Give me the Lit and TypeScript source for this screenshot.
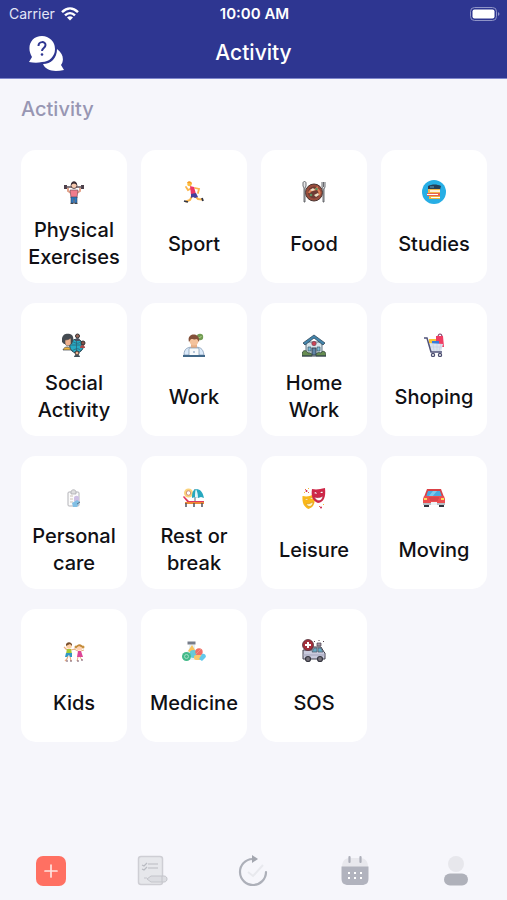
import { LitElement, html, css, svg } from "lit";
import { customElement, property, state } from "lit/decorators.js";
import { classMap } from "lit/directives/class-map.js";

const icons: Record<string, unknown> = {
  exercises: svg`
    <path d="M2 5h3v4H2zM19 5h3v4h-3z" fill="#4c3f49"/>
    <path d="M4 7h16" stroke="#5d5058" stroke-width="1.5"/>
    <path d="M6 8v3l3 2M18 8v3l-3 2" fill="none" stroke="#e3a38b" stroke-width="2"/>
    <path d="M8 10h8l-1 8H9z" fill="#f07c8c" stroke="#6a4450" stroke-width=".6"/>
    <circle cx="12" cy="5.5" r="3" fill="#f6c9ae" stroke="#413038" stroke-width=".8"/>
    <path d="M9 5c0-5 6-5 6 0-2-2-4-2-6 0z" fill="#3b2c33"/>
    <path d="M9 17h6v6h-2.500v-4h-1v4H9z" fill="#2d79c0" stroke="#34415c" stroke-width=".6"/>
    <path d="M8.500 23.500h3M12.500 23.500h3" stroke="#444" stroke-width="1"/>`,
  sport: svg`
    <path d="M10 8 6 10 4 7M13 8l4 1-1 4" fill="none" stroke="#fbb54b" stroke-width="1.800" stroke-linecap="round"/>
    <path d="m10 16-2 4-4 1.500M13 16l3 3 4 .5" fill="none" stroke="#fbb54b" stroke-width="2" stroke-linecap="round"/>
    <path d="m8 6 4 1 2 7-5 1z" fill="#ed3767"/>
    <path d="m9 14 5-1 2 4-3 1-2-1-2 1z" fill="#45409b"/>
    <circle cx="7.500" cy="4" r="2.300" fill="#fcbd3f"/>
    <path d="M5 3c1-3 5-2 5 1L8 3z" fill="#f59a24"/>
    <path d="m2 21 4 1M20 18l1 3" stroke="#303543" stroke-width="1.800"/>`,
  food: svg`
    <circle cx="12" cy="12.500" r="8.500" fill="#994d3c" stroke="#49332f" stroke-width="1"/>
    <circle cx="12" cy="12.500" r="6" fill="#6e3c34"/>
    <path d="M7 13c2-5 5-1 8-5 1 3 4 3 2 7" fill="none" stroke="#de8055" stroke-width="2"/>
    <path d="m8 10 3-2 2 2-3 1zM12 15l4-2 1 2-3 2z" fill="#eee0c5"/>
    <circle cx="14.500" cy="9" r="1.300" fill="#5c9261"/><circle cx="9" cy="15" r="1.300" fill="#5c9261"/>
    <path d="M1 3c0-2 3-2 3 0v3L3 8v14H2V8L1 6z" fill="#e6e6e8" stroke="#494b50" stroke-width=".8"/>
    <path d="M20 2v5l1 2v13h1V9l1-2V2M21.500 2v5" fill="#e6e6e8" stroke="#494b50" stroke-width=".8"/>`,
  studies: svg`
    <circle cx="12" cy="12" r="12" fill="#27aee5"/>
    <path d="M6 6c4-2 9-2 13 0l-1 4H6z" fill="#263f57"/><path d="M8 6h4v2H8z" fill="#46708c"/>
    <path d="M6 9h12v4H6z" fill="#f2b84b"/><path d="M8 10h10v2H8z" fill="#fff1d9"/>
    <path d="M5 13h13v3H5z" fill="#e76351"/><path d="M5 14h11v1H5z" fill="#fff"/>
    <path d="M7 16h11v3H7z" fill="#eeb63e"/><path d="M9 17h9v1H9z" fill="#fff"/>`,
  social: svg`
    <circle cx="14.500" cy="13" r="6.800" fill="#27a9c2" stroke="#294653" stroke-width="1"/>
    <path d="M8 12h13M14.500 6v14M10 8c4 3 7 3 9 0M10 18c4-3 7-3 9 0" fill="none" stroke="#2c647a" stroke-width=".8"/>
    <path d="M0 9C-1 1 4 0 8 1c4 1 4 6 2 10H2z" fill="#444b51"/>
    <path d="M3 7c3 0 4-1 6-2v6c-2 3-6 2-6-1z" fill="#f0b18e" stroke="#424449" stroke-width=".6"/>
    <path d="M1 17c1-4 7-4 8 0z" fill="#efb33c" stroke="#3e4449" stroke-width=".7"/>
    <circle cx="15.500" cy="3" r="2" fill="#9a6657" stroke="#333" stroke-width="1"/><path d="M13 8c0-4 5-4 5 0z" fill="#485363"/>
    <circle cx="21" cy="10" r="2" fill="#884f46" stroke="#333" stroke-width="1"/><path d="M18 15c0-4 5-4 5 0z" fill="#a94848"/>
    <circle cx="15" cy="20" r="2" fill="#e7b292" stroke="#333" stroke-width="1"/><path d="M12 24c0-3 6-3 6 0z" fill="#424f59"/>`,
  work: svg`
    <circle cx="18" cy="4" r="3.200" fill="#719c53"/><path d="m16.500 4 1 1 2-2" fill="none" stroke="#b8d58b"/>
    <path d="M2 22c0-7 4-8 10-8s9 1 10 8z" fill="#dbeafa" stroke="#7890ad" stroke-width=".7"/>
    <path d="M9 11h6v4l-3 2-3-2z" fill="#e8af87"/>
    <circle cx="12" cy="8" r="4.500" fill="#f4c29c"/>
    <path d="M7 9C4-1 19-1 17 9l-2-3c-3 1-5 0-6 0z" fill="#835039"/>
    <rect x="7" y="15" width="10" height="8" rx="1" fill="#f8fafc" stroke="#8096ae" stroke-width=".7"/>
    <circle cx="12" cy="19" r="1" fill="#a2b6cf"/><path d="M1 23h22" stroke="#416889" stroke-width="2"/>`,
  home: svg`
    <path d="M4 9h16v12H4z" fill="#d6e5eb" stroke="#405768" stroke-width=".8"/>
    <path d="M1 10 12 2l11 8-2 2-9-7-9 7z" fill="#4386ad" stroke="#31475b" stroke-width=".8"/>
    <circle cx="12" cy="10.500" r="2.200" fill="#cb4355" stroke="#6c4150" stroke-width=".6"/>
    <path d="M10 15h4v7h-4z" fill="#6084a5" stroke="#364655"/><path d="M6 14h3v4H6zM15 14h3v4h-3z" fill="#78b8d4" stroke="#435665" stroke-width=".7"/>
    <path d="M0 22c0-6 5-5 6-2 4-1 4 3 4 3H0zM14 23c0-4 3-4 5-3 1-3 5-2 5 2v1z" fill="#668c51" stroke="#32463a" stroke-width=".8"/>
    <path d="M0 23h24" stroke="#354450"/>`,
  shopping: svg`
    <path d="M16 4c0-4 4-4 4 0" fill="none" stroke="#863d69" stroke-width="1.200"/>
    <path d="M14 3h7l1 11h-8z" fill="#ef3e63"/><path d="M7 6h7v7H7z" fill="#f8c534"/><path d="M10 8h7v5h-7z" fill="#357cdc"/>
    <path d="m6 10 15 1-2 8H9z" fill="#dce3ef"/><path d="m11 11 1 7M15 11v7M19 11l-2 7M8 14h12" stroke="#c3ccdc" stroke-width=".6"/>
    <path d="M2 5h3l4 14h11" fill="none" stroke="#505379" stroke-width="1.500"/>
    <circle cx="11" cy="22" r="1.600" fill="#eee" stroke="#4b4d70" stroke-width="1.200"/><circle cx="18" cy="22" r="1.600" fill="#eee" stroke="#4b4d70" stroke-width="1.200"/>`,
  care: svg`
    <rect x="6" y="6" width="11" height="14" rx="1" fill="#fbfbfb" stroke="#b3b3b8" stroke-width="1"/>
    <path d="M9 6c0-3 5-3 5 0v2H9z" fill="#ddd" stroke="#a5a5ab" stroke-width=".7"/>
    <path d="M8 10h3M8 13h3M8 16h3" stroke="#c4b6a8" stroke-width=".8"/>
    <path d="M12 12c0-3 5-3 5 0v3l-3 2-2-2z" fill="#cdbfe4"/>
    <path d="m10 17 5-3 3 2-3 5h-4z" fill="#82bfe4"/><path d="m15 18 3-2" stroke="#60788e"/>`,
  rest: svg`
    <circle cx="6.500" cy="7" r="4.500" fill="#fbd27b"/><circle cx="6.500" cy="7" r="2.200" fill="#fff" stroke="#bb6a63" stroke-width=".7"/>
    <path d="M13 3v12" stroke="#526a7c" stroke-width="1"/>
    <path d="M10 12c0-6 1-8 4-9 5 0 7 4 8 9l-3-1-3 1-3-1z" fill="#27a8bf"/><path d="M14 3c-1 2-1 5-1 8l3 1c0-4-1-7-2-9z" fill="#e5f6f8"/>
    <path d="m2 10 5 5h15v2H6l-5-6z" fill="#dd3760"/><path d="M3 16h19v2H3z" fill="#ee8a37"/>
    <path d="M4 17v4M12 17v4M20 17v4" stroke="#51505c" stroke-width="1.500"/>`,
  leisure: svg`
    <path d="M.5 10c5 1 8 0 12-2 1 8 0 13-6 15C2 21 0 17 .5 10z" fill="#f9b719"/>
    <path d="M3 14c1-2 3-1 3 0M8 13c1-2 3-1 3 0M4 18c3 0 5-1 7-2 0 5-5 6-7 2z" fill="#fff5c8" stroke="#ca8710" stroke-width=".5"/>
    <path d="M10 3c5 1 8 0 13-1 1 9-1 14-7 15-6-2-7-8-6-14z" fill="#ce2748"/>
    <path d="M12 7c1-2 3-1 3 1M18 7c1-2 3-2 3 0M12 11c3 1 6 1 9-1-1 6-6 6-9 1z" fill="#fff" stroke="#a51c38" stroke-width=".5"/>
    <path d="M3 3h1v1H3zM6 6h1v1H6zM17 20h1v1h-1z" fill="#e76754"/><path d="M6 2h1v1H6zM2 6h1v1H2zM21 18h1v1h-1z" fill="#f3bd38"/>
    <circle cx="19" cy="21.500" r="1" fill="#ce2748"/><circle cx="4.500" cy="5" r="1" fill="#ce2748"/>`,
  car: svg`
    <path d="M2 17h5v4H2zM17 17h5v4h-5z" fill="#30343d"/>
    <path d="M5 3h14l3 8H2z" fill="#da4146"/><path d="M6 5h12l2 6H4z" fill="#4aa9e0"/><path d="M11 5h4l-5 6H6z" fill="#7cc8ec"/>
    <path d="M2 10h20l1 3v6H1v-6z" fill="#ed4e50"/>
    <path d="M2 12h3v2H2zM19 12h3v2h-3z" fill="#ffd85c"/><path d="M7 12h10M8 14h8" stroke="#c83c48" stroke-width="1"/>
    <path d="M1 17h22v2H1z" fill="#b7bfc5"/><path d="M9 16h6v3H9z" fill="#eef4f7"/>`,
  kids: svg`
    <path d="M5 11 2 8M9 11l4-1M8 17l1 5M6 17l-1 3-2 2" fill="none" stroke="#e9ad82" stroke-width="1.200"/>
    <circle cx="7" cy="7" r="2.800" fill="#ffd0a5"/><path d="M4 7c-1-5 7-5 6 0L8 5z" fill="#79502e"/>
    <path d="M5 10h4l1 5H4z" fill="#a5c934"/><path d="M4 14h6v4H8l-1-2-2 2H3z" fill="#3398c4"/>
    <path d="m16 12-4-2M19 12l3-1M16 18l-1 4M18 18l2 3" fill="none" stroke="#e7ad85" stroke-width="1"/>
    <circle cx="14" cy="8" r="1.500" fill="#c99340"/><circle cx="21" cy="8" r="1.500" fill="#c99340"/>
    <circle cx="17.500" cy="9" r="2.800" fill="#ffd2b1"/><path d="M14 9c0-5 7-5 7 0l-4-2z" fill="#c18a3a"/>
    <path d="M16 12h3l2 6h-6z" fill="#dd4596"/><path d="M4 22h2M8 22h2M15 22h2M19 21h2" stroke="#755263" stroke-width="1"/>`,
  medicine: svg`
    <path d="M7 6h6v4l2 3v8H5v-8l2-3z" fill="#e6f1f4"/><rect x="5.500" y="2.500" width="8" height="3" fill="#777d89"/>
    <path d="m10 6 3 5-2 4-5-3z" fill="#fac45c"/><circle cx="11.500" cy="15" r="4" fill="#65cad8"/>
    <circle cx="17" cy="13" r="3.700" fill="#f06e67"/><path d="m14 15 5-5" stroke="#ee9a89" stroke-width=".8"/>
    <circle cx="4.500" cy="17.500" r="4.500" fill="#45ba8a"/><circle cx="4.500" cy="17.500" r="2" fill="none" stroke="#a3dec3" stroke-width="1"/>
    <rect x="12" y="16" width="8" height="5" rx="2" fill="#f9c76a"/><path d="m17 20 3-5c3-1 5 2 3 4l-3 3z" fill="#62c9ec"/>`,
  sos: svg`
    <path d="M1 11h9V8h9l3 5 1 1v6H1z" fill="#c9cadd" stroke="#42414d" stroke-width="1"/>
    <path d="M12 9h3v4h-5zM16 9h3l2 4h-5z" fill="#66a9c3" stroke="#4b5766" stroke-width=".7"/>
    <path d="M1 16h22" stroke="#a3a3ba"/><path d="M15 7V4h4v3z" fill="#a6929e" stroke="#45414d" stroke-width=".7"/>
    <path d="m13 3-1-1M17 2V1M21 3l1-1" stroke="#55414d" stroke-width="1"/>
    <circle cx="6" cy="6" r="5.500" fill="#a32e3b" stroke="#522e37" stroke-width=".8"/><path d="M5 3h2v2h2v2H7v2H5V7H3V5h2z" fill="#fff"/>
    <circle cx="6" cy="20" r="2.500" fill="#77727b" stroke="#353640" stroke-width="1.200"/><circle cx="18" cy="20" r="2.500" fill="#77727b" stroke="#353640" stroke-width="1.200"/>`,
};

const activities = [
  ["exercises", "Physical Exercises"], ["sport", "Sport"], ["food", "Food"], ["studies", "Studies"],
  ["social", "Social Activity"], ["work", "Work"], ["home", "Home Work"], ["shopping", "Shoping"],
  ["care", "Personal care"], ["rest", "Rest or break"], ["leisure", "Leisure"], ["car", "Moving"],
  ["kids", "Kids"], ["medicine", "Medicine"], ["sos", "SOS"],
];

const tabs = [
  { name: "Add activity", art: svg`<rect x="1" y="1" width="30" height="30" rx="7" fill="#ff7062"/><path d="M16 10v12M10 16h12" stroke="#ffe3e0" stroke-width="1.700" stroke-linecap="round"/>` },
  { name: "Tasks", art: svg`<rect x="2.500" y="1.500" width="24" height="28" rx="2.500" fill="#e6e7eb" stroke="#ceced4" stroke-width="1.500"/><path d="m6 10 2 1 3-3M6 14l2 1 3-3M12 9h10M12 13h10" fill="none" stroke="#b9bbc2" stroke-width="1.200"/><path d="M8 23h3" stroke="#c5c6cd"/><path d="m11 24 4-3h13c4 0 4 6 0 6H15z" fill="#dcdde2" stroke="#c3c4ca" stroke-width="1"/><path d="M26 21v6" stroke="#c3c4ca"/>` },
  { name: "Progress", art: svg`<path d="M15.500 4A13 13 0 1 0 29 17" fill="none" stroke="#adb0b9" stroke-width="2.200" stroke-linecap="round"/><path d="m15 0 6 4-6 4z" fill="#a3a6af"/><path d="m11 17 5 4 10-11" fill="none" stroke="#e8e9ee" stroke-width="2"/>` },
  { name: "Calendar", art: svg`<path d="M3 12c0-6 3-9 8-9h10c5 0 8 3 8 9z" fill="#e8e8ed"/><path d="M2.500 11.500h27V23c0 5-2 7-7 7h-13c-5 0-7-2-7-7z" fill="#b1b3be"/><path d="M10.500 2v5M21.500 2v5" stroke="#adafb9" stroke-width="2.200" stroke-linecap="round"/><path d="M9 17h2v2H9zM15 17h2v2h-2zM21 17h2v2h-2zM9 22h2v2H9zM15 22h2v2h-2zM21 22h2v2h-2z" fill="#fff"/>` },
  { name: "Profile", art: svg`<circle cx="16" cy="9" r="8" fill="#e7e7ec"/><rect x="4" y="18.500" width="24" height="12" rx="6" fill="#afb1ba"/>` },
];

@customElement("activity-card")
class ActivityCard extends LitElement {
  @property() icon = "";
  @property() label = "";

  static styles = css`
    :host { display: block; min-width: 0; }
    .card {
      width: 100%; height: 100%; display: flex; flex-direction: column; align-items: center; gap: 13px;
      padding: 30px 0 12px; border: 0; border-radius: 15px; background: #fff; color: #101014;
      font: 500 20px/27px Inter, "Noto Sans", sans-serif; cursor: pointer;
    }
    .icon { width: 24px; height: 24px; flex: none; }
    .label { min-height: 54px; padding: 0 4px; display: flex; align-items: center; text-align: center; }
  `;

  render() {
    return html`<button class="card" type="button">
      <svg class="icon" viewBox="0 0 24 24" aria-hidden="true">${icons[this.icon]}</svg>
      <span class="label">${this.label}</span>
    </button>`;
  }
}

@customElement("app-root")
class AppRoot extends LitElement {
  @state() private active = 0;

  static styles = css`
    :host {
      display: flex; flex-direction: column; min-height: 100vh; background: #f6f6fb;
      font-family: Inter, "Noto Sans", sans-serif;
    }
    .top { background: #2e3691; color: #fff; border-bottom: 1px solid #7f87cc; }
    .status, .nav { display: grid; grid-template-columns: 1fr auto 1fr; align-items: center; }
    .status { height: 27px; padding: 0 7px 0 9px; font-size: 14px; line-height: 18px; }
    .carrier { display: flex; align-items: center; gap: 6px; color: #e3e5f6; }
    .wifi { width: 18px; height: 14px; }
    .time { font-weight: 600; font-size: 15px; }
    .battery { width: 30px; height: 14px; justify-self: end; }
    .nav { height: 51px; padding: 0 28px; }
    .help { width: 36px; height: 36px; padding: 0; border: 0; background: none; cursor: pointer; }
    .chat { display: block; width: 36px; height: 36px; }
    .title { margin: 0; font-size: 21px; line-height: 27px; font-weight: 500; }
    .content { flex: 1; padding: 16px 20px 20px 21px; }
    .section { margin: 0 0 27px; color: #9896b3; font-size: 20px; line-height: 28px; font-weight: 500; }
    .grid { display: grid; grid-template-columns: repeat(4, minmax(0, 1fr)); gap: 20px 14px; }
    .tabs { display: grid; grid-template-columns: repeat(5, 1fr); padding: 13px 0; }
    .tab { display: grid; place-items: center; padding: 0; border: 0; background: none; cursor: pointer; }
    .glyph { width: 32px; height: 32px; }
    .current { cursor: default; }
  `;

  render() {
    return html`
      <header class="top">
        <div class="status">
          <span class="carrier">Carrier
            <svg class="wifi" viewBox="0 0 18 14" aria-hidden="true" fill="none" stroke="#fff" stroke-width="2.400">
              <path d="M1 5.200c5-5 11-5 16 0M4 8.400c3-3 7-3 10 0"/><path d="M6 10.600q3-2.600 6 0l-3 3z" fill="#fff" stroke="none"/>
            </svg>
          </span>
          <span class="time">10:00 AM</span>
          <svg class="battery" viewBox="0 0 30 14" aria-hidden="true">
            <rect x=".5" y=".5" width="26" height="13" rx="4" fill="none" stroke="#8f94c7"/>
            <rect x="2.500" y="2.500" width="22" height="9" rx="2" fill="#fff"/><path d="M28 5q3 2 0 4z" fill="#8f94c7"/>
          </svg>
        </div>
        <div class="nav">
          <button class="help" type="button" aria-label="Help">
            <svg class="chat" viewBox="0 0 36 36" aria-hidden="true">
              <path d="M29 14c7 5 7 12 4 16l3 5c-10 2-18 1-21-6 8 0 14-6 14-15z" fill="#fff"/>
              <path d="M14 1a13 13 0 1 1 0 26c-4 1-8 1-13 0l3-5C-2 12 3 1 14 1z" fill="#fff"/>
              <path d="M10.500 11c0-5 7-5 7-1 0 3-3.500 3-3.500 6" fill="none" stroke="#2e3691" stroke-width="2"/><circle cx="14" cy="19.500" r="1.300" fill="#2e3691"/>
            </svg>
          </button>
          <h1 class="title">Activity</h1>
        </div>
      </header>
      <main class="content">
        <h2 class="section">Activity</h2>
        <div class="grid">
          ${activities.map(([icon, label]) => html`<activity-card .icon=${icon} .label=${label}></activity-card>`)}
        </div>
      </main>
      <nav class="tabs" aria-label="Main">
        ${tabs.map((tab, i) => html`<button type="button" aria-label=${tab.name}
          class=${classMap({ tab: true, current: i === this.active })} @click=${() => (this.active = i)}>
          <svg class="glyph" viewBox="0 0 32 32" aria-hidden="true">${tab.art}</svg>
        </button>`)}
      </nav>`;
  }
}
